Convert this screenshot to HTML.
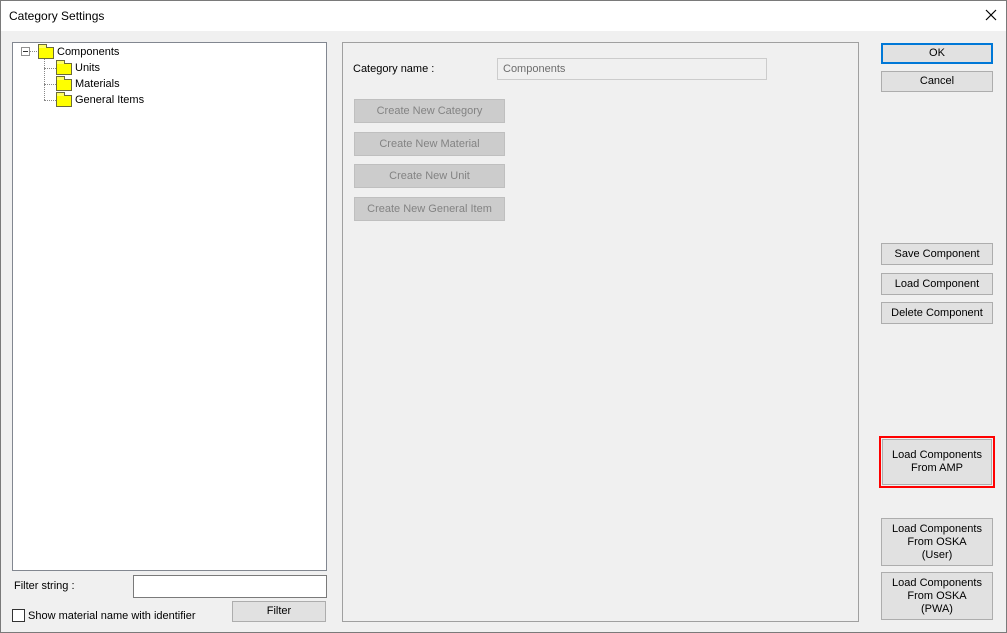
<!DOCTYPE html>
<html><head><style>
*{margin:0;padding:0;box-sizing:border-box}
body{width:1007px;height:633px;background:#f0f0f0;font-family:"Liberation Sans",sans-serif;font-size:11px;color:#000;position:relative;overflow:hidden}
.a{position:absolute}
.title{left:0;top:0;width:1007px;height:31px;background:#fff}
.btn{position:absolute;background:#e1e1e1;border:1px solid #adadad;display:flex;align-items:center;justify-content:center;text-align:center;line-height:13px}
.dis{background:#cccccc;border:1px solid #bfbfbf;color:#838383}
.fold{position:absolute;width:16px;height:12px;background:#ffff00;border:1px solid #6a6a3a}
.fold:before{content:"";position:absolute;left:-1px;top:-4px;width:7px;height:3px;background:#ffff60;border:1px solid #6a6a3a;border-bottom:none}
</style></head><body>
<div class="a title"></div>
<div class="a" style="left:0;top:0;width:1007px;height:633px;border:1px solid #7a7a7a"></div>
<div class="a" style="left:9px;top:9px;font-size:12px">Category Settings</div>
<svg class="a" style="left:985px;top:9px" width="12" height="12"><path d="M1 1L11 11M11 1L1 11" stroke="#000" stroke-width="1.2"/></svg>

<div class="a" style="left:12px;top:42px;width:315px;height:529px;background:#fff;border:1px solid #828790"></div>
<div class="a" style="left:21px;top:47px;width:9px;height:9px;border:1px solid #919191;background:#fff"></div>
<div class="a" style="left:23px;top:51px;width:5px;height:1px;background:#333"></div>
<div class="a" style="left:30px;top:51px;width:7px;border-top:1px dotted #888"></div>
<div class="fold" style="left:38px;top:47px"></div>
<div class="a" style="left:57px;top:46px">Components</div>
<div class="a" style="left:44px;top:59px;height:41px;border-left:1px dotted #888"></div>
<div class="a" style="left:44px;top:68px;width:12px;border-top:1px dotted #888"></div>
<div class="a" style="left:44px;top:84px;width:12px;border-top:1px dotted #888"></div>
<div class="a" style="left:44px;top:100px;width:12px;border-top:1px dotted #888"></div>
<div class="fold" style="left:56px;top:63px"></div>
<div class="fold" style="left:56px;top:79px"></div>
<div class="fold" style="left:56px;top:95px"></div>
<div class="a" style="left:75px;top:62px">Units</div>
<div class="a" style="left:75px;top:78px">Materials</div>
<div class="a" style="left:75px;top:94px">General Items</div>

<div class="a" style="left:14px;top:580px">Filter string :</div>
<div class="a" style="left:133px;top:575px;width:194px;height:23px;background:#fff;border:1px solid #7a7a7a"></div>
<div class="a" style="left:12px;top:609px;width:13px;height:13px;background:#fff;border:1px solid #333"></div>
<div class="a" style="left:28px;top:610px">Show material name with identifier</div>
<div class="btn" style="left:232px;top:601px;width:94px;height:21px">Filter</div>

<div class="a" style="left:342px;top:42px;width:517px;height:580px;border:1px solid #a0a0a0"></div>
<div class="a" style="left:353px;top:63px">Category name :</div>
<div class="a" style="left:497px;top:58px;width:270px;height:22px;border:1px solid #ccc;padding:4px 5px;color:#6d6d6d">Components</div>
<div class="btn dis" style="left:354px;top:99px;width:151px;height:24px">Create New Category</div>
<div class="btn dis" style="left:354px;top:132px;width:151px;height:24px">Create New Material</div>
<div class="btn dis" style="left:354px;top:164px;width:151px;height:24px">Create New Unit</div>
<div class="btn dis" style="left:354px;top:197px;width:151px;height:24px">Create New General Item</div>

<div class="btn" style="left:881px;top:43px;width:112px;height:21px;border:2px solid #0078d7">OK</div>
<div class="btn" style="left:881px;top:71px;width:112px;height:21px">Cancel</div>
<div class="btn" style="left:881px;top:243px;width:112px;height:22px">Save Component</div>
<div class="btn" style="left:881px;top:273px;width:112px;height:22px">Load Component</div>
<div class="btn" style="left:881px;top:302px;width:112px;height:22px">Delete Component</div>
<div class="a" style="left:879px;top:436px;width:116px;height:52px;border:2px solid #ff0000"></div>
<div class="btn" style="left:882px;top:439px;width:110px;height:46px">Load Components<br>From AMP</div>
<div class="btn" style="left:881px;top:518px;width:112px;height:48px">Load Components<br>From OSKA<br>(User)</div>
<div class="btn" style="left:881px;top:572px;width:112px;height:48px">Load Components<br>From OSKA<br>(PWA)</div>
</body></html>
